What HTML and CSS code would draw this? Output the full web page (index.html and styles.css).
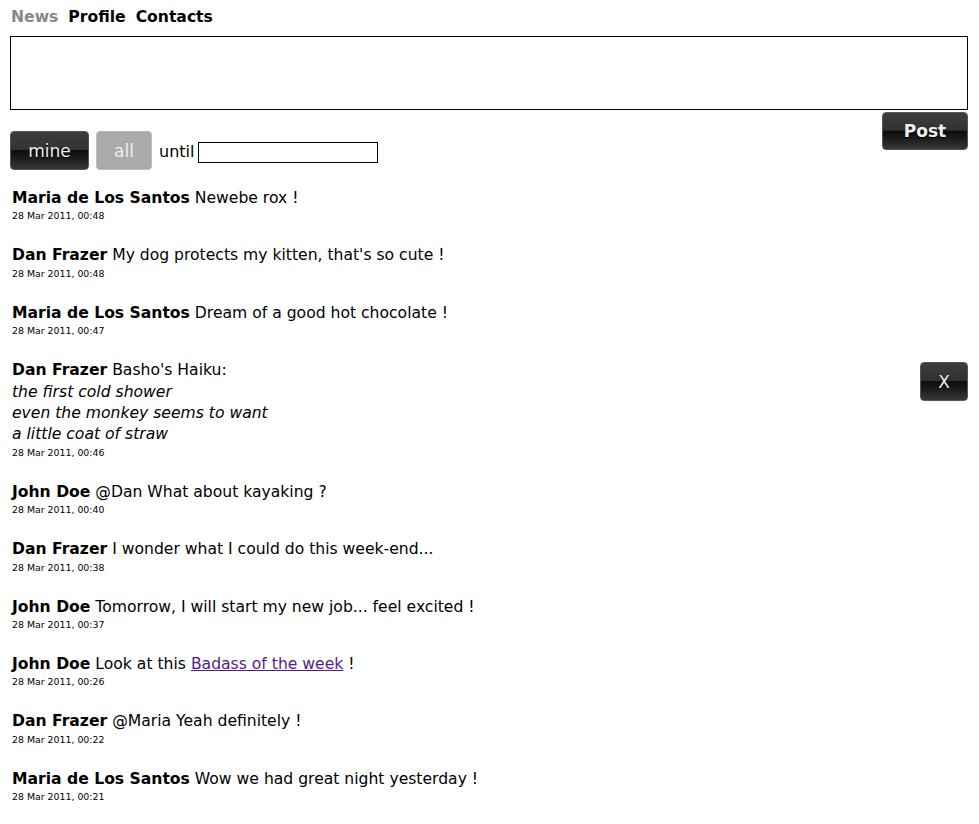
FILE: index.html
```html
<!DOCTYPE html>
<html>
<head>
<meta charset="utf-8">
<link rel="stylesheet" href="styles.css">
</head>
<body>
<nav class="nav">
  <a class="nav-item current">News</a>
  <a class="nav-item">Profile</a>
  <a class="nav-item">Contacts</a>
</nav>
<div class="composer">
  <textarea class="composer-input"></textarea>
  <button class="btn btn-post">Post</button>
</div>
<div class="filters">
  <button class="btn btn-mine">mine</button>
  <button class="btn btn-all">all</button>
  <span class="until">until</span>
  <input class="until-input" type="text">
</div>
<ul class="feed">
  <li class="post"><div class="post-text"><b>Maria de Los Santos</b> Newebe rox !</div><div class="post-date">28 Mar 2011, 00:48</div></li>
  <li class="post"><div class="post-text"><b>Dan Frazer</b> My dog protects my kitten, that's so cute !</div><div class="post-date">28 Mar 2011, 00:48</div></li>
  <li class="post"><div class="post-text"><b>Maria de Los Santos</b> Dream of a good hot chocolate !</div><div class="post-date">28 Mar 2011, 00:47</div></li>
  <li class="post"><button class="btn btn-delete">X</button><div class="post-text"><b>Dan Frazer</b> Basho's Haiku:<br><i>the first cold shower<br>even the monkey seems to want<br>a little coat of straw</i></div><div class="post-date">28 Mar 2011, 00:46</div></li>
  <li class="post"><div class="post-text"><b>John Doe</b> @Dan What about kayaking ?</div><div class="post-date">28 Mar 2011, 00:40</div></li>
  <li class="post"><div class="post-text"><b>Dan Frazer</b> I wonder what I could do this week-end...</div><div class="post-date">28 Mar 2011, 00:38</div></li>
  <li class="post"><div class="post-text"><b>John Doe</b> Tomorrow, I will start my new job... feel excited !</div><div class="post-date">28 Mar 2011, 00:37</div></li>
  <li class="post"><div class="post-text"><b>John Doe</b> Look at this <a class="post-link" href="#">Badass of the week</a> !</div><div class="post-date">28 Mar 2011, 00:26</div></li>
  <li class="post"><div class="post-text"><b>Dan Frazer</b> @Maria Yeah definitely !</div><div class="post-date">28 Mar 2011, 00:22</div></li>
  <li class="post"><div class="post-text"><b>Maria de Los Santos</b> Wow we had great night yesterday !</div><div class="post-date">28 Mar 2011, 00:21</div></li>
</ul>
</body>
</html>
```

FILE: styles.css
```css
html, body {
  margin: 0;
  padding: 0;
  background: #fff;
}
body {
  font-family: "DejaVu Sans", sans-serif;
  color: #000;
  padding: 8px 11px 0 10px;
}
.nav {
  display: flex;
  gap: 10px;
  height: 19px;
  line-height: 19px;
  padding-left: 1px;
}
.nav-item {
  font-weight: bold;
  font-size: 15.6px;
  color: #000;
}
.nav-item.current {
  color: #888;
}
.composer {
  margin-top: 9px;
  display: flow-root;
}
.composer-input {
  display: block;
  box-sizing: border-box;
  width: 100%;
  height: 74px;
  border: 1px solid #000;
  margin: 0;
  padding: 2px;
  resize: none;
  font-family: "DejaVu Sans", sans-serif;
}
.btn {
  font-family: "DejaVu Sans", sans-serif;
  border: 1px solid #555;
  border-radius: 4px;
  color: #eee;
  text-shadow: 0 1px 1px #000;
  background: linear-gradient(to bottom, #3d3d3d 0%, #323232 48%, #0d0d0d 50%, #1b1b1b 70%, #383838 100%);
  box-sizing: border-box;
  padding: 0;
  cursor: pointer;
}
.btn-post {
  float: right;
  margin-top: 2px;
  width: 86px;
  height: 38px;
  font-size: 17px;
  font-weight: bold;
}
.filters {
  display: flex;
  align-items: center;
  margin-top: -19px;
  height: 39px;
}
.btn-mine {
  width: 79px;
  height: 39px;
  font-size: 17px;
}
.btn-all {
  margin-left: 7px;
  width: 56px;
  height: 39px;
  font-size: 17px;
  background: #aaa;
  border-color: #bbb;
  text-shadow: none;
  color: #eee;
}
.until {
  margin-left: 7px;
  font-size: 16px;
  padding-top: 2px;
}
.until-input {
  margin-left: 4px;
  margin-top: 3px;
  box-sizing: border-box;
  width: 180px;
  height: 21px;
  border: 1px solid #000;
  padding: 0 2px;
}
.feed {
  list-style: none;
  margin: 18px 0 0 0;
  padding: 0 0 0 2px;
}
.post {
  margin-bottom: 23px;
  display: flow-root;
}
.post-text {
  font-size: 15.6px;
  line-height: 21.4px;
}
.post-date {
  font-size: 9.4px;
  line-height: 12px;
  padding-top: 1px;
}
.post-link {
  color: #551a8b;
}
.btn-delete {
  float: right;
  margin-top: 2px;
  width: 48px;
  height: 39px;
  font-size: 17px;
}
```
